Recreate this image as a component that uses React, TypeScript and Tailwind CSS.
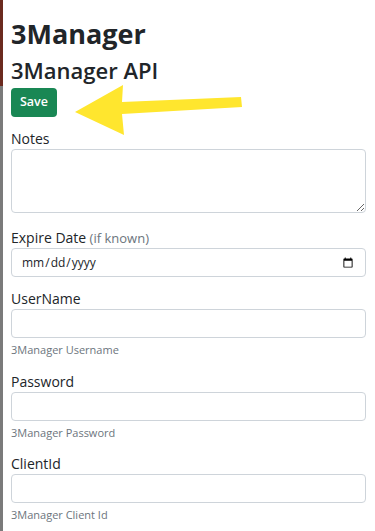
import React from 'react'

function Field({
  label,
  hint,
  extra,
  type = 'text',
}: {
  label: string
  hint?: string
  extra?: string
  type?: string
}) {
  return (
    <div className="flex flex-col">
      <label className="h-[20px] text-[14px] leading-[20px] text-[#212529]">
        {label}
        {extra && <span className="text-[13px] text-[#6c757d]"> {extra}</span>}
      </label>
      <input
        type={type}
        className="h-[29px] w-full rounded-[4px] border border-[#ced4da] bg-white px-[9px] text-[12px] text-[#212529] outline-none"
      />
      {hint && <div className="mt-[4px] h-[16px] text-[11px] leading-[16px] text-[#6c757d]">{hint}</div>}
    </div>
  )
}

export default function App() {
  return (
    <div
      className="relative flex h-[531px] w-[375px] overflow-hidden bg-white"
      style={{ fontFamily: '"Open Sans", "Noto Sans", sans-serif' }}
    >
      {/* dimmed page behind the panel */}
      <div className="flex w-[3px] shrink-0 flex-col">
        <div className="h-[86px] bg-[#6b2a1f]" />
        <div className="flex-1 bg-[#7a7a7a]" />
      </div>

      {/* panel */}
      <div className="flex-1 rounded-tl-[6px] bg-white pl-[8px] pr-[9px] pt-[15px]">
        <h1 className="h-[38px] text-[27px] font-bold leading-[38px] text-[#212529]">3Manager</h1>
        <h2 className="mt-[3px] h-[28px] text-[22px] font-semibold leading-[28px] text-[#212529]">
          3Manager API
        </h2>
        <button className="mt-[4px] h-[29px] rounded-[4px] bg-[#198754] px-[9px] text-[12.5px] font-semibold text-white">
          Save
        </button>

        <div className="mt-[12px] flex flex-col">
          <label className="h-[20px] text-[14px] leading-[20px] text-[#212529]">Notes</label>
          <textarea className="block h-[64px] w-full resize-y rounded-[4px] border border-[#ced4da] outline-none" />
        </div>

        <div className="mt-[15px]">
          <Field label="Expire Date" extra="(if known)" type="date" />
        </div>
        <div className="mt-[12px]">
          <Field label="UserName" hint="3Manager Username" />
        </div>
        <div className="mt-[14px]">
          <Field label="Password" hint="3Manager Password" />
        </div>
        <div className="mt-[13px]">
          <Field label="ClientId" hint="3Manager Client Id" />
        </div>
      </div>

      {/* annotation arrow */}
      <svg className="pointer-events-none absolute left-0 top-0" width="375" height="531">
        <polygon
          points="75,112 123,85 122,102 241,97 242,107 122,114 124,135"
          fill="#ffe62e"
        />
      </svg>
    </div>
  )
}
